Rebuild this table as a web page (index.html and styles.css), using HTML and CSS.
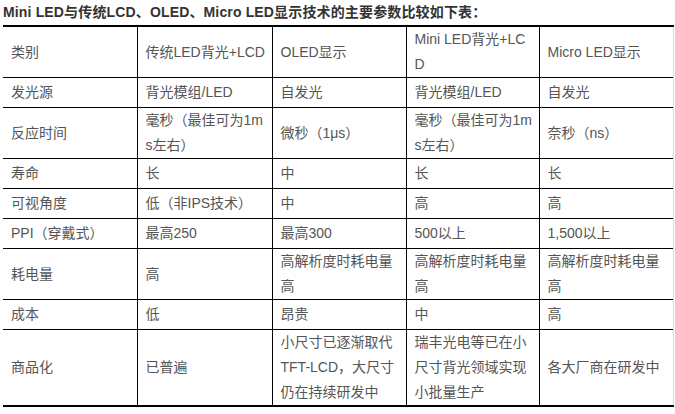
FILE: index.html
```html
<!DOCTYPE html>
<html lang="zh-CN">
<head>
<meta charset="utf-8">
<title>Mini LED 参数比较</title>
<link rel="stylesheet" href="styles.css">
</head>
<body>
<div class="article">
  <p class="title">Mini LED与传统LCD、OLED、Micro LED显示技术的主要参数比较如下表：</p>
  <table class="compare">
    <colgroup>
      <col class="c1"><col class="c2"><col class="c3"><col class="c4"><col class="c5">
    </colgroup>
    <tbody>
      <tr class="head"><td>类别</td><td>传统LED背光+LCD</td><td>OLED显示</td><td>Mini LED背光+LCD</td><td>Micro LED显示</td></tr>
      <tr><td>发光源</td><td>背光模组/LED</td><td>自发光</td><td>背光模组/LED</td><td>自发光</td></tr>
      <tr><td>反应时间</td><td>毫秒（最佳可为1ms左右）</td><td>微秒（1μs）</td><td>毫秒（最佳可为1ms左右）</td><td>奈秒（ns）</td></tr>
      <tr><td>寿命</td><td>长</td><td>中</td><td>长</td><td>长</td></tr>
      <tr><td>可视角度</td><td>低（非IPS技术）</td><td>中</td><td>高</td><td>高</td></tr>
      <tr><td>PPI（穿戴式）</td><td>最高250</td><td>最高300</td><td>500以上</td><td>1,500以上</td></tr>
      <tr><td>耗电量</td><td>高</td><td>高解析度时耗电量高</td><td>高解析度时耗电量高</td><td>高解析度时耗电量高</td></tr>
      <tr><td>成本</td><td>低</td><td>昂贵</td><td>中</td><td>高</td></tr>
      <tr><td>商品化</td><td>已普遍</td><td>小尺寸已逐渐取代TFT-LCD，大尺寸仍在持续研发中</td><td>瑞丰光电等已在小尺寸背光领域实现小批量生产</td><td>各大厂商在研发中</td></tr>
    </tbody>
  </table>
</div>
</body>
</html>
```
FILE: styles.css
```css
html, body {
  margin: 0;
  padding: 0;
  background: #fff;
}

.article {
  padding: 0 0 0 3px;
  font-family: "Liberation Sans", "Noto Sans CJK SC", sans-serif;
}

.title {
  margin: 0;
  height: 25px;
  line-height: 25px;
  font-size: 14px;
  font-weight: bold;
  color: #333;
  letter-spacing: 0.15px;
  white-space: nowrap;
}

.compare {
  border-collapse: collapse;
  table-layout: fixed;
  width: 670px;
  border-top: 2px solid #000;
  border-bottom: 2px solid #000;
  font-size: 14px;
  color: #555;
}

.compare .c1 { width: 134px; }
.compare .c2 { width: 135px; }
.compare .c3 { width: 134px; }
.compare .c4 { width: 133px; }
.compare .c5 { width: 134px; }

.compare td {
  height: 29px;
  padding: 0 5px 0 8px;
  line-height: 25px;
  vertical-align: middle;
  word-break: break-all;
  border-top: 1px solid #000;
  border-left: 1px solid #000;
  border-right: 1px solid #000;
}

.compare tr.head td {
  border-top: 2px solid #000;
}

.compare td:first-child {
  border-left: none;
}

.compare td:last-child {
  border-right: 1px solid #ddd;
}
```
